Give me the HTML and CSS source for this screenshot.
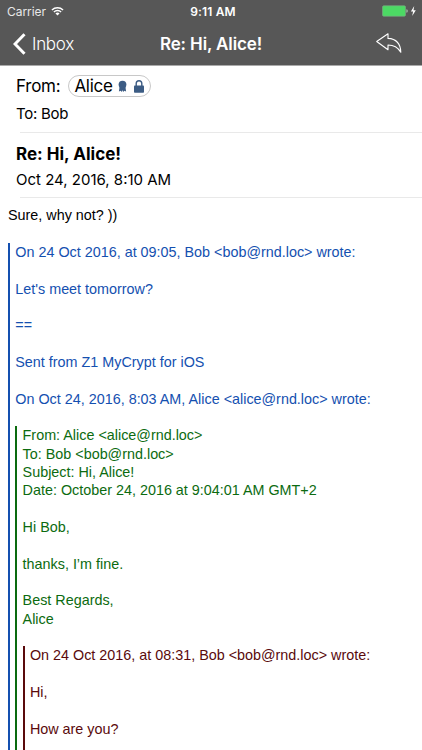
FILE: index.html
```html
<!DOCTYPE html>
<html lang="en">
<head>
    <meta charset="UTF-8">
    <meta name="viewport" content="width=device-width, initial-scale=1.0">
    <title>Re: Hi, Alice!</title>
    <link rel="stylesheet" href="styles.css">
</head>
<body>
    <header class="topBar">
        <div class="statusBar">
            <div class="carrier">
                <span>Carrier</span>
                <svg class="wifi" viewBox="0 0 14 10">
                    <path d="M1 3.9a8.6 8.6 0 0 1 12 0M3.1 6a5.6 5.6 0 0 1 7.8 0" fill="none" stroke="#fff" stroke-width="1.5" />
                    <path d="M7 9.8L4.8 7.6a3.1 3.1 0 0 1 4.4 0z" fill="#fff" />
                </svg>
            </div>
            <div class="clock">9:11 AM</div>
            <svg class="battery" viewBox="0 0 35 12">
                <rect x="0.5" y="0.8" width="23" height="10.4" rx="1.2" fill="#4cd964" stroke="#7fa886" stroke-width="0.6" />
                <path d="M24.3 4.2q1.6 0.3 1.6 1.8t-1.6 1.8z" fill="#9fb5a3" />
                <path d="M32.2 1L28.9 6.4h2.2L30.2 11l3.6-5.7h-2.3z" fill="#fff" />
            </svg>
        </div>
        <nav class="navBar">
            <a class="back" href="#">
                <svg class="chevron" viewBox="0 0 13 22">
                    <path d="M11.5 1.2L2 11l9.5 9.8" fill="none" stroke="#fff" stroke-width="3" />
                </svg>
                <span>Inbox</span>
            </a>
            <h1 class="navTitle">Re: Hi, Alice!</h1>
            <svg class="reply" viewBox="0 0 26 20">
                <path d="M0.7 8.5L12 0.8v4.6C19.5 5.8 24.5 10.5 24.8 19.2C22 14.5 18.5 12 12 12v4.7z" fill="none" stroke="#fff" stroke-width="1.1" stroke-linejoin="round" />
            </svg>
        </nav>
    </header>

    <section class="mailHeader">
        <div class="addresses">
            <div class="fromRow">
                <span class="fromLabel">From:</span>
                <span class="sender">
                    <span class="senderName">Alice</span>
                    <svg class="badge" viewBox="0 0 10 13">
                        <circle cx="5" cy="4.3" r="4.3" fill="#3c5c84" />
                        <path d="M1.8 6.5L1 12l2-0.7L4.3 12.6L5 10.5l0.7 2.1L7 11.3L9 12L8.2 6.5z" fill="#3c5c84" />
                    </svg>
                    <svg class="lock" viewBox="0 0 10 13">
                        <rect x="0" y="5.5" width="10" height="7.3" rx="0.8" fill="#3c5c84" />
                        <path d="M2.2 6V3.6a2.8 2.8 0 0 1 5.6 0V6" fill="none" stroke="#3c5c84" stroke-width="1.4" />
                    </svg>
                </span>
            </div>
            <div class="toRow">To: Bob</div>
        </div>
        <hr class="divider">
        <div class="subjectBlock">
            <h2 class="subject">Re: Hi, Alice!</h2>
            <div class="date">Oct 24, 2016, 8:10 AM</div>
        </div>
        <hr class="divider">
    </section>

    <main class="mailBody">
        <p>Sure, why not? ))</p>
        <blockquote class="quote blue">
            <p>On 24 Oct 2016, at 09:05, Bob &lt;bob@rnd.loc&gt; wrote:</p>
            <p>Let's meet tomorrow?</p>
            <p>==</p>
            <p>Sent from Z1 MyCrypt for iOS</p>
            <p>On Oct 24, 2016, 8:03 AM, Alice &lt;alice@rnd.loc&gt; wrote:</p>
            <blockquote class="quote green">
                <p>From: Alice &lt;alice@rnd.loc&gt;<br>To: Bob &lt;bob@rnd.loc&gt;<br>Subject: Hi, Alice!<br>Date: October 24, 2016 at 9:04:01 AM GMT+2</p>
                <p>Hi Bob,</p>
                <p>thanks, I’m fine.</p>
                <p>Best Regards,<br>Alice</p>
                <blockquote class="quote red">
                    <p>On 24 Oct 2016, at 08:31, Bob &lt;bob@rnd.loc&gt; wrote:</p>
                    <p>Hi,</p>
                    <p>How are you?</p>
                </blockquote>
            </blockquote>
        </blockquote>
    </main>
</body>
</html>
```
FILE: styles.css
```css
* {
    box-sizing: border-box;
}

body {
    margin: 0;
    height: 750px;
    overflow: hidden;
    display: flex;
    flex-direction: column;
    background-color: #fff;
    color: #000;
    font-family: Inter, sans-serif;
}

p, h1, h2, blockquote {
    margin: 0;
}

.topBar {
    flex: none;
    height: 66px;
    background-color: #575757;
    border-bottom: 1px solid #aaa;
    color: #fff;
}

.statusBar {
    display: grid;
    grid-template-columns: 1fr auto 1fr;
    align-items: center;
    height: 22px;
    padding: 0 5px 0 7px;
    font-size: 12px;
}

.carrier {
    display: flex;
    align-items: center;
    gap: 5px;
    color: #e8e8e8;
    letter-spacing: -0.05px;
}

.wifi {
    width: 13px;
    height: 10px;
}

.clock {
    font-weight: 600;
    letter-spacing: 0.15px;
    padding-left: 2px;
}

.battery {
    justify-self: end;
    width: 35px;
    height: 12px;
}

.navBar {
    display: grid;
    grid-template-columns: 1fr auto 1fr;
    align-items: center;
    height: 43px;
    padding: 0 20px 0 13px;
}

.back {
    display: flex;
    align-items: center;
    gap: 6px;
    color: #fff;
    font-size: 17px;
    font-weight: 300;
    letter-spacing: -0.3px;
    text-decoration: none;
}

.chevron {
    width: 13px;
    height: 22px;
}

.navTitle {
    padding-left: 7px;
    font-size: 17px;
    font-weight: 600;
    letter-spacing: -0.12px;
}

.reply {
    justify-self: end;
    width: 26px;
    height: 20px;
    margin-top: -2px;
}

.mailHeader {
    flex: none;
    padding-left: 16px;
}

.addresses {
    height: 66px;
}

.subjectBlock {
    height: 64px;
    padding-top: 10px;
}

.divider {
    height: 1px;
    margin: 0 0 0 4px;
    border: none;
    background-color: #e9e9e9;
}

.fromRow {
    display: flex;
    align-items: center;
    gap: 8px;
    padding-top: 9px;
    font-size: 17px;
    letter-spacing: -0.25px;
}

.sender {
    display: flex;
    align-items: center;
    height: 22px;
    padding: 0 6px 0 5px;
    border: 1px solid #c8c8c8;
    border-radius: 11px;
}

.badge {
    width: 9px;
    height: 13px;
    margin-left: 5px;
}

.lock {
    width: 10px;
    height: 13px;
    margin-left: 7px;
}

.toRow {
    margin-top: 8px;
    font-size: 15px;
    line-height: 18px;
    letter-spacing: -0.25px;
}

.subject {
    font-size: 17px;
    line-height: 22px;
    font-weight: 700;
}

.date {
    margin-top: 6px;
    font-size: 15px;
    line-height: 18px;
}

.mailBody {
    display: flex;
    flex-direction: column;
    gap: 18.34px;
    padding: 8.4px 8px 0;
    font-family: "Liberation Sans", Arial, sans-serif;
    font-size: 14.37px;
    line-height: 18.34px;
}

.quote {
    display: flex;
    flex-direction: column;
    gap: 18.34px;
    padding-left: 5.3px;
    border-left: 2px solid;
    white-space: nowrap;
}

.blue {
    color: #1450b0;
}

.green {
    color: #0c6b10;
}

/* the innermost quote carries on below the fold */
.red {
    padding-bottom: 40px;
    color: #5a0a0c;
}
```
